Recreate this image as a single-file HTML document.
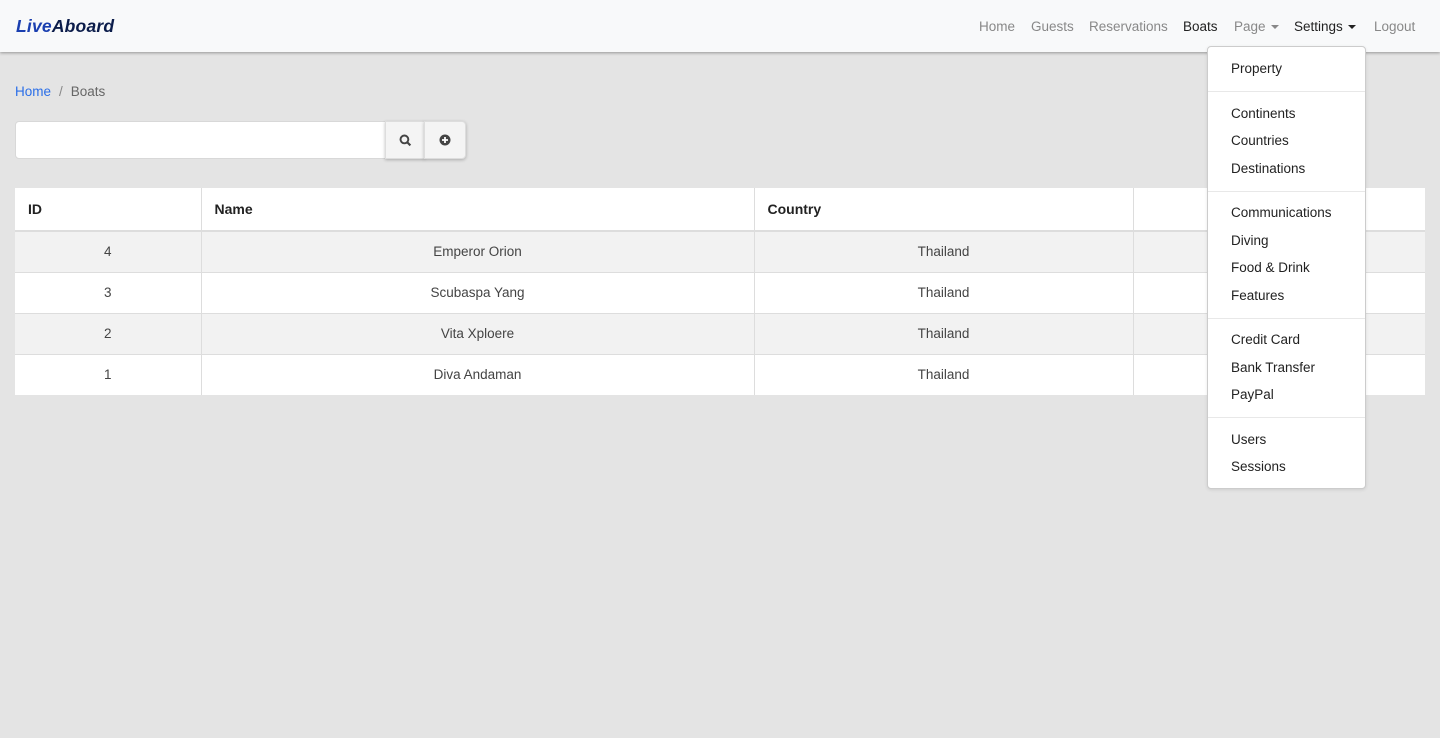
<!DOCTYPE html>
<html><head><meta charset="utf-8"><style>
*{box-sizing:border-box;margin:0;padding:0}
body{width:1440px;height:738px;background:#e4e4e4;font-family:"Liberation Sans",sans-serif;font-size:13.5px;color:#333;position:relative;overflow:hidden}
.nav{position:absolute;left:0;top:0;width:1440px;height:52px;background:#f8f9fa;box-shadow:0 1px 3px rgba(0,0,0,.35)}
.brand{position:absolute;left:16px;top:16px;font-weight:bold;font-style:italic;font-size:17.5px;color:#0b1c4a;letter-spacing:0.2px}
.brand span{color:#1a3fb0}
.nav a{position:absolute;top:19px;color:#888;text-decoration:none}
.nav a.d{color:#222}
.caret{display:inline-block;width:0;height:0;border-left:4px solid transparent;border-right:4px solid transparent;border-top:4px solid currentColor;vertical-align:2px;margin-left:5px}
.bc{position:absolute;left:15px;top:84px}
.bc a{color:#2a6ee8}
.bc .s{color:#888;margin:0 8px}
.bc .c{color:#666}
.inp{position:absolute;left:15px;top:121px;width:371px;height:38px;background:#fff;border-radius:4px 0 0 4px;border:1px solid #d8d8d8}
.btn{position:absolute;top:121px;height:38px;background:#f4f4f4;border:1px solid #ddd;box-shadow:0 1px 3px rgba(0,0,0,.25);display:flex;align-items:center;justify-content:center}
table{position:absolute;left:15px;top:188px;width:1410px;border-collapse:collapse;background:#fff}
td,th{border-left:1px solid #ddd;height:41px;text-align:center;color:#444}
td:first-child,th:first-child{border-left:none}
th{text-align:left;padding-left:13px;font-weight:bold;font-size:14px;color:#222;height:43px;border-bottom:2px solid #ddd}
tr+tr td{border-top:1px solid #ddd}
tr.o td{background:#f2f2f2}
.dd{position:absolute;left:1207px;top:46px;width:159px;height:443px;background:#fff;border:1px solid #ccc;border-radius:4px;box-shadow:0 1px 3px rgba(0,0,0,.1)}
.dd div{position:absolute;left:23px;color:#222}
.dd hr{position:absolute;left:0;width:157px;border:none;border-top:1px solid #e8e8e8}
</style></head><body>
<div class="nav">
<div class="brand"><span>Live</span>Aboard</div>
<a style="left:979px">Home</a>
<a style="left:1031px">Guests</a>
<a style="left:1089px">Reservations</a>
<a class="d" style="left:1183px">Boats</a>
<a style="left:1234px">Page<span class="caret"></span></a>
<a class="d" style="left:1294px">Settings<span class="caret"></span></a>
<a style="left:1374px">Logout</a>
</div>
<div class="bc"><a>Home</a><span class="s">/</span><span class="c">Boats</span></div>
<div class="inp"></div>
<div class="btn" style="left:385px;width:40px"><svg width="13" height="13" viewBox="0 0 12 12"><circle cx="5" cy="5" r="3.6" fill="none" stroke="#444" stroke-width="1.8"/><path d="M7.6 7.6L10.5 10.5" stroke="#444" stroke-width="2"/></svg></div>
<div class="btn" style="left:424px;width:42px;border-radius:0 4px 4px 0"><svg width="12" height="12" viewBox="0 0 12 12"><circle cx="6" cy="6" r="5.5" fill="#444"/><path d="M6 3v6M3 6h6" stroke="#fff" stroke-width="1.8"/></svg></div>
<table>
<tr><th style="width:186px">ID</th><th style="width:553px">Name</th><th style="width:379px">Country</th><th></th></tr>
<tr class="o"><td>4</td><td>Emperor Orion</td><td>Thailand</td><td></td></tr>
<tr><td>3</td><td>Scubaspa Yang</td><td>Thailand</td><td></td></tr>
<tr class="o"><td>2</td><td>Vita Xploere</td><td>Thailand</td><td></td></tr>
<tr><td>1</td><td>Diva Andaman</td><td>Thailand</td><td></td></tr>
</table>
<div class="dd">
<div style="top:14px">Property</div><hr style="top:44px">
<div style="top:59px">Continents</div>
<div style="top:86px">Countries</div>
<div style="top:114px">Destinations</div><hr style="top:144px">
<div style="top:158px">Communications</div>
<div style="top:186px">Diving</div>
<div style="top:213px">Food &amp; Drink</div>
<div style="top:241px">Features</div><hr style="top:271px">
<div style="top:285px">Credit Card</div>
<div style="top:313px">Bank Transfer</div>
<div style="top:340px">PayPal</div><hr style="top:370px">
<div style="top:385px">Users</div>
<div style="top:412px">Sessions</div>
</div>
</body></html>
